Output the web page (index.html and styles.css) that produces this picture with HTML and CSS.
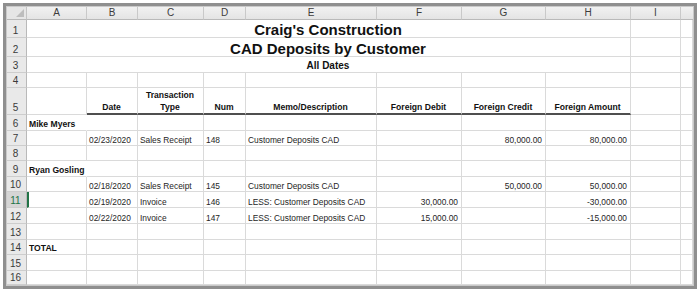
FILE: index.html
```html
<!DOCTYPE html>
<html lang="en">
<head>
<meta charset="utf-8">
<title>CAD Deposits by Customer</title>
<link rel="stylesheet" href="styles.css">
</head>
<body>
<div class="frame">
  <div class="sheet">
    <div class="grid">
      <!-- column headings -->
      <div class="corner"><span class="tri"></span></div>
      <div class="ch">A</div><div class="ch">B</div><div class="ch">C</div><div class="ch">D</div>
      <div class="ch">E</div><div class="ch">F</div><div class="ch">G</div><div class="ch">H</div>
      <div class="ch">I</div><div class="ch last"></div>

      <!-- row 1 -->
      <div class="rh">1</div>
      <div class="c merge title">Craig's Construction</div>
      <div class="c"></div><div class="c"></div>
      <!-- row 2 -->
      <div class="rh">2</div>
      <div class="c merge title">CAD Deposits by Customer</div>
      <div class="c"></div><div class="c"></div>
      <!-- row 3 -->
      <div class="rh">3</div>
      <div class="c merge sub">All Dates</div>
      <div class="c"></div><div class="c"></div>
      <!-- row 4 -->
      <div class="rh">4</div>
      <div class="c"></div><div class="c"></div><div class="c"></div><div class="c"></div><div class="c"></div>
      <div class="c"></div><div class="c"></div><div class="c"></div><div class="c"></div><div class="c"></div>
      <!-- row 5: column captions -->
      <div class="rh">5</div>
      <div class="c"></div>
      <div class="c hd">Date</div>
      <div class="c hd">Transaction<br>Type</div>
      <div class="c hd">Num</div>
      <div class="c hd">Memo/Description</div>
      <div class="c hd">Foreign Debit</div>
      <div class="c hd">Foreign Credit</div>
      <div class="c hd">Foreign Amount</div>
      <div class="c"></div><div class="c"></div>
      <!-- row 6 -->
      <div class="rh">6</div>
      <div class="c b over">Mike Myers</div>
      <div class="c"></div><div class="c"></div><div class="c"></div><div class="c"></div>
      <div class="c"></div><div class="c"></div><div class="c"></div><div class="c"></div><div class="c"></div>
      <!-- row 7 -->
      <div class="rh">7</div>
      <div class="c"></div>
      <div class="c">02/23/2020</div>
      <div class="c">Sales Receipt</div>
      <div class="c">148</div>
      <div class="c">Customer Deposits CAD</div>
      <div class="c"></div>
      <div class="c num">80,000.00</div>
      <div class="c num">80,000.00</div>
      <div class="c"></div><div class="c"></div>
      <!-- row 8 -->
      <div class="rh">8</div>
      <div class="c"></div><div class="c"></div><div class="c"></div><div class="c"></div><div class="c"></div>
      <div class="c"></div><div class="c"></div><div class="c"></div><div class="c"></div><div class="c"></div>
      <!-- row 9 -->
      <div class="rh">9</div>
      <div class="c b over">Ryan Gosling</div>
      <div class="c"></div><div class="c"></div><div class="c"></div><div class="c"></div>
      <div class="c"></div><div class="c"></div><div class="c"></div><div class="c"></div><div class="c"></div>
      <!-- row 10 -->
      <div class="rh">10</div>
      <div class="c"></div>
      <div class="c">02/18/2020</div>
      <div class="c">Sales Receipt</div>
      <div class="c">145</div>
      <div class="c">Customer Deposits CAD</div>
      <div class="c"></div>
      <div class="c num">50,000.00</div>
      <div class="c num">50,000.00</div>
      <div class="c"></div><div class="c"></div>
      <!-- row 11 (active row) -->
      <div class="rh active">11</div>
      <div class="c cursor"></div>
      <div class="c">02/19/2020</div>
      <div class="c">Invoice</div>
      <div class="c">146</div>
      <div class="c">LESS: Customer Deposits CAD</div>
      <div class="c num">30,000.00</div>
      <div class="c"></div>
      <div class="c num">-30,000.00</div>
      <div class="c"></div><div class="c"></div>
      <!-- row 12 -->
      <div class="rh">12</div>
      <div class="c"></div>
      <div class="c">02/22/2020</div>
      <div class="c">Invoice</div>
      <div class="c">147</div>
      <div class="c">LESS: Customer Deposits CAD</div>
      <div class="c num">15,000.00</div>
      <div class="c"></div>
      <div class="c num">-15,000.00</div>
      <div class="c"></div><div class="c"></div>
      <!-- row 13 -->
      <div class="rh">13</div>
      <div class="c"></div><div class="c"></div><div class="c"></div><div class="c"></div><div class="c"></div>
      <div class="c"></div><div class="c"></div><div class="c"></div><div class="c"></div><div class="c"></div>
      <!-- row 14 -->
      <div class="rh">14</div>
      <div class="c b">TOTAL</div>
      <div class="c"></div><div class="c"></div><div class="c"></div><div class="c"></div>
      <div class="c"></div><div class="c"></div><div class="c"></div><div class="c"></div><div class="c"></div>
      <!-- row 15 -->
      <div class="rh">15</div>
      <div class="c"></div><div class="c"></div><div class="c"></div><div class="c"></div><div class="c"></div>
      <div class="c"></div><div class="c"></div><div class="c"></div><div class="c"></div><div class="c"></div>
      <!-- row 16 -->
      <div class="rh">16</div>
      <div class="c"></div><div class="c"></div><div class="c"></div><div class="c"></div><div class="c"></div>
      <div class="c"></div><div class="c"></div><div class="c"></div><div class="c"></div><div class="c"></div>
    </div>
  </div>
</div>
</body>
</html>
```

FILE: styles.css
```css
html, body {
  margin: 0;
  padding: 0;
  background: #ffffff;
}

.frame {
  margin: 3px;
  border: 3px solid #8f8f8f;
}

.sheet {
  border: 1px solid #c9c9c9;
  background: #ffffff;
}

.grid {
  display: grid;
  grid-template-columns: 20px 60px 51px 66px 42px 131px 85px 84px 85px 50px 12px;
  grid-template-rows: 13px 18px 19px 16px 15px 27px 16px 15px 15px 16px 15px 16px 16px 16px 15px 16px 14px;
  overflow: hidden;
  font-family: "Liberation Sans", Arial, sans-serif;
  color: #1e1e1e;
}

/* sheet chrome: corner, column letters, row numbers */
.corner {
  position: relative;
  background: #e6e6e6;
  border-right: 1px solid #c4c4c4;
  border-bottom: 1px solid #b9b9b9;
}

.tri {
  position: absolute;
  right: 2px;
  bottom: 2px;
  width: 0;
  height: 0;
  border-left: 8px solid transparent;
  border-bottom: 8px solid #bdbdbd;
}

.ch {
  box-sizing: border-box;
  background: linear-gradient(#f1f1f1, #e4e4e4);
  border-right: 1px solid #c9c9c9;
  border-bottom: 1px solid #b9b9b9;
  font-size: 10px;
  line-height: 12px;
  text-align: center;
  color: #3c3c3c;
}

.ch.last {
  border-right: none;
}

.rh {
  box-sizing: border-box;
  background: #e9e9e9;
  border-right: 1px solid #b9b9b9;
  border-bottom: 1px solid #cdcdcd;
  font-size: 10px;
  line-height: 12px;
  color: #3a3a3a;
  display: flex;
  align-items: flex-end;
  justify-content: center;
  padding-bottom: 0;
  padding-right: 2px;
}

.rh.active {
  background: #d5d5d5;
  color: #217346;
}

/* worksheet cells */
.c {
  box-sizing: border-box;
  border-right: 1px solid #dadada;
  border-bottom: 1px solid #dadada;
  font-size: 8.4px;
  line-height: 10px;
  padding: 0 3px 0 2px;
  white-space: nowrap;
  display: flex;
  align-items: flex-end;
  color: #262626;
}

.c.merge {
  grid-column: span 8;
  justify-content: center;
  font-weight: bold;
  color: #111111;
}

.c.title {
  font-size: 15px;
  line-height: 15px;
  padding-bottom: 0;
}

.c.sub {
  font-size: 10px;
  line-height: 12px;
  padding-bottom: 0;
}

.c.b {
  font-weight: bold;
  font-size: 8.6px;
  color: #111111;
  padding-bottom: 1px;
}

.c.over {
  border-right-color: transparent;
  overflow: visible;
}

.c.num {
  justify-content: flex-end;
}

.c.hd {
  font-weight: bold;
  font-size: 8.6px;
  line-height: 12px;
  justify-content: center;
  text-align: center;
  color: #111111;
  border-bottom: 2px solid #4f4f4f;
  padding-bottom: 0;
}

.c.cursor {
  border-left: 2px solid #217346;
}
```
